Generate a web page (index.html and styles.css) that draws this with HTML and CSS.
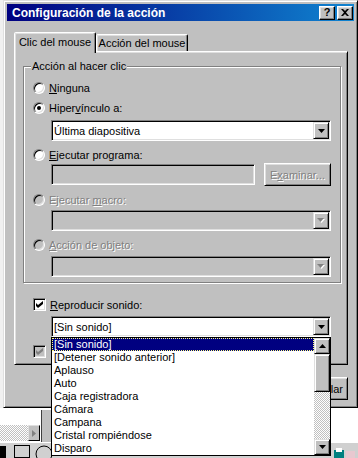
FILE: index.html
```html
<!DOCTYPE html>
<html lang="es">
<head>
<meta charset="utf-8">
<title>Configuración de la acción</title>
<link rel="stylesheet" href="styles.css">
</head>
<body>
<div class="app-bottom">
  <div class="vbar"></div>
  <div class="hscroll">
    <div class="hscroll-track"></div>
    <div class="hscroll-btn"><svg width="4" height="7" viewBox="0 0 4 7"><polygon points="0,0 4,3.5 0,7" fill="#808080"/></svg></div>
  </div>
  <div class="draw-toolbar">
    <svg class="draw-shapes" width="60" height="15" viewBox="0 0 60 15"><rect x="0" y="3" width="6" height="12" fill="#000"/><rect x="14.5" y="2.5" width="15" height="12" fill="none" stroke="#000"/><ellipse cx="44" cy="11" rx="8" ry="8" fill="none" stroke="#000"/></svg>
    <svg class="draw-color" width="22" height="11" viewBox="0 0 22 11"><rect x="0" y="3" width="10" height="8" fill="#008080"/><rect x="2" y="1" width="6" height="4" fill="#fff"/><rect x="12" y="4" width="9" height="7" fill="#e8c8d0"/></svg>
  </div>
</div>

<div class="dialog">
  <div class="titlebar">
    <span class="title">Configuración de la acción</span>
    <div class="caption-btns">
      <span class="cap-btn cap-help">?</span>
      <span class="cap-btn"><svg width="8" height="7" viewBox="0 0 8 7"><path d="M0 0h2l2 2 2-2h2L5 3.5 8 7H6L4 5 2 7H0l3-3.5z" fill="#000"/></svg></span>
    </div>
  </div>

  <div class="tabs">
    <div class="tab tab-active">Clic del mouse</div>
    <div class="tab tab-other">Acción del mouse</div>
  </div>

  <div class="panel">
    <div class="group">
      <div class="group-label">Acción al hacer clic</div>

      <div class="opt opt-first"><span class="radio"></span><span><u>N</u>inguna</span></div>
      <div class="opt opt-next"><span class="radio radio-on"></span><span>Hiper<u>v</u>ínculo a:</span></div>
      <div class="combo combo-a"><span class="combo-text">Última diapositiva</span><span class="combo-btn"><svg width="7" height="4" viewBox="0 0 7 4"><polygon points="0,0 7,0 3.5,4" fill="#000"/></svg></span></div>

      <div class="opt opt-next"><span class="radio"></span><span><u>E</u>jecutar programa:</span></div>
      <div class="field-row">
        <span class="textfield"></span>
        <span class="button disabled-text">E<u>x</u>aminar...</span>
      </div>

      <div class="opt opt-macro disabled-text"><span class="radio radio-off"></span><span>Ejecutar <u>m</u>acro:</span></div>
      <div class="combo combo-off combo-macro"><span class="combo-text"></span><span class="combo-btn"><svg width="8" height="5" viewBox="0 0 8 5"><polygon points="1,1 8,1 4.5,5" fill="#fff"/><polygon points="0,0 7,0 3.5,4" fill="#808080"/></svg></span></div>

      <div class="opt opt-next disabled-text"><span class="radio radio-off"></span><span><u>A</u>cción de objeto:</span></div>
      <div class="combo combo-off combo-obj"><span class="combo-text"></span><span class="combo-btn"><svg width="8" height="5" viewBox="0 0 8 5"><polygon points="1,1 8,1 4.5,5" fill="#fff"/><polygon points="0,0 7,0 3.5,4" fill="#808080"/></svg></span></div>
    </div>

    <div class="chk-row chk-sound"><span class="check"><svg width="7" height="7" viewBox="0 0 7 7"><path d="M0 2l2 2 5-4v3L2 7 0 5z" fill="#000"/></svg></span><span><u>R</u>eproducir sonido:</span></div>
    <div class="combo combo-sound"><span class="combo-text">[Sin sonido]</span><span class="combo-btn"><svg width="7" height="4" viewBox="0 0 7 4"><polygon points="0,0 7,0 3.5,4" fill="#000"/></svg></span></div>
    <div class="chk-row chk-highlight"><span class="check check-off"><svg width="7" height="7" viewBox="0 0 7 7"><path d="M0 2l2 2 5-4v3L2 7 0 5z" fill="#808080"/></svg></span></div>
  </div>

  <div class="buttons">
    <span class="button btn-main"></span>
    <span class="button btn-main btn-cancel">Cancelar</span>
  </div>
</div>

<div class="droplist">
  <div class="items">
    <div class="item item-sel">[Sin sonido]</div>
    <div class="item">[Detener sonido anterior]</div>
    <div class="item">Aplauso</div>
    <div class="item">Auto</div>
    <div class="item">Caja registradora</div>
    <div class="item">Cámara</div>
    <div class="item">Campana</div>
    <div class="item">Cristal rompiéndose</div>
    <div class="item">Disparo</div>
  </div>
  <div class="vscroll">
    <span class="sb-btn"><svg width="7" height="4" viewBox="0 0 7 4"><polygon points="0,4 7,4 3.5,0" fill="#000"/></svg></span>
    <span class="sb-thumb"></span>
    <span class="sb-track"></span>
    <span class="sb-btn"><svg width="7" height="4" viewBox="0 0 7 4"><polygon points="0,0 7,0 3.5,4" fill="#000"/></svg></span>
  </div>
</div>
</body>
</html>
```

FILE: styles.css
```css
* { box-sizing: border-box; }
html, body { margin: 0; padding: 0; }
body {
  width: 358px;
  height: 458px;
  overflow: hidden;
  position: relative;
  background: #f0f0f0;
  font-family: "Liberation Sans", Arial, sans-serif;
  font-size: 11px;
  color: #000;
}
u { text-decoration: underline; text-underline-offset: 1px; }

/* background application (behind the dialog) */
.app-bottom {
  position: absolute;
  left: 0;
  top: 408px;
  width: 358px;
  height: 50px;
  background: #fff;
}
.vbar {
  position: absolute;
  left: 41px;
  top: 2px;
  width: 10px;
  height: 32px;
  background: #c0c0c0;
  border-left: 1px solid #404040;
}
.hscroll {
  position: absolute;
  left: 0;
  top: 17px;
  width: 40px;
  height: 16px;
  display: flex;
}
.hscroll-track {
  flex: 1;
  background: repeating-conic-gradient(#fff 0 25%, #c0c0c0 0 50%) 0 0 / 2px 2px;
}
.hscroll-btn {
  width: 12px;
  background: #c0c0c0;
  border: 1px solid;
  border-color: #dfdfdf #000 #000 #dfdfdf;
  display: flex;
  align-items: center;
  justify-content: center;
}
.draw-toolbar {
  position: absolute;
  left: 0;
  top: 34px;
  width: 358px;
  height: 16px;
  background: #d0d0d0;
  border-top: 1px solid #fff;
  display: flex;
  align-items: flex-end;
  justify-content: space-between;
}
.draw-shapes, .draw-color { display: block; }
.draw-color { margin-right: 2px; }

/* dialog window */
.dialog {
  position: absolute;
  left: 3px;
  top: 0;
  width: 355px;
  height: 408px;
  background: #c0c0c0;
  border: 1px solid;
  border-color: #dfdfdf #000 #000 #dfdfdf;
  box-shadow: inset 1px 1px #fff, inset -1px -1px #808080;
  padding: 3px;
  display: flex;
  flex-direction: column;
}
.titlebar {
  height: 17px;
  flex: none;
  background: linear-gradient(90deg, #000080, #1084d0);
  display: flex;
  align-items: center;
  padding: 0 1px 0 5px;
  color: #fff;
  font-weight: bold;
  font-size: 12px;
}
.title { flex: 1; white-space: nowrap; }
.caption-btns { display: flex; gap: 2px; }
.cap-btn {
  width: 16px;
  height: 14px;
  background: #c0c0c0;
  border: 1px solid;
  border-color: #fff #000 #000 #fff;
  box-shadow: inset -1px -1px #808080, inset 1px 1px #dfdfdf;
  display: flex;
  align-items: center;
  justify-content: center;
  color: #000;
  font-size: 11px;
  line-height: 1;
}

/* tabs */
.tabs {
  display: flex;
  align-items: flex-start;
  height: 20px;
  flex: none;
  margin: 11px 0 0 7px;
  position: relative;
  z-index: 2;
}
.tab {
  background: #c0c0c0;
  border: 1px solid;
  border-bottom: 0;
  border-color: #fff #000 transparent #fff;
  border-radius: 2px 2px 0 0;
  box-shadow: inset -1px 0 #808080, inset 1px 1px #dfdfdf;
  display: flex;
  align-items: center;
  justify-content: center;
  white-space: nowrap;
}
.tab-active { width: 82px; height: 21px; padding-bottom: 2px; }
.tab-other { width: 92px; height: 17px; margin-top: 2px; }

/* panel */
.panel {
  flex: none;
  margin: -1px 6px 0 7px;
  height: 314px;
  border: 1px solid;
  border-color: #fff #000 #000 #fff;
  box-shadow: inset 1px 1px #dfdfdf, inset -1px -1px #808080;
}

.group {
  margin: 14px 6px 0 8px;
  border: 1px solid #808080;
  box-shadow: inset 1px 1px #fff, 1px 1px #fff;
  padding: 0 0 5px 0;
}
.group-label {
  width: max-content;
  margin: -7px 0 0 7px;
  padding: 0 1px;
  line-height: 13px;
  background: #c0c0c0;
}

.opt {
  display: flex;
  align-items: center;
  gap: 4px;
  height: 13px;
  margin-left: 9px;
  white-space: nowrap;
}
.opt-first { margin-top: 8px; }
.opt-next { margin-top: 7px; }
.opt-macro { margin-top: 7px; }

.radio {
  width: 12px;
  height: 12px;
  flex: none;
  border-radius: 50%;
  background: #fff;
  border: 1px solid;
  border-color: #808080 #fff #fff #808080;
  box-shadow: inset 1px 1px #000, inset -1px -1px #dfdfdf;
  display: flex;
  align-items: center;
  justify-content: center;
}
.radio-on::after {
  content: "";
  width: 4px;
  height: 4px;
  border-radius: 50%;
  background: #000;
}
.radio-off { background: #c0c0c0; }

.disabled-text { color: #808080; text-shadow: 1px 1px 0 #fff; }

.combo {
  width: 280px;
  height: 21px;
  margin-left: 27px;
  background: #fff;
  border: 1px solid;
  border-color: #808080 #fff #fff #808080;
  box-shadow: inset 1px 1px #000, inset -1px -1px #dfdfdf;
  padding: 1px 1px 1px 2px;
  display: flex;
  align-items: center;
}
.combo-text { flex: 1; white-space: nowrap; }
.combo-btn {
  width: 16px;
  height: 17px;
  flex: none;
  background: #c0c0c0;
  border: 1px solid;
  border-color: #dfdfdf #000 #000 #dfdfdf;
  box-shadow: inset 1px 1px #fff, inset -1px -1px #808080;
  display: flex;
  align-items: center;
  justify-content: center;
}
.combo-off { background: #c0c0c0; }
.combo-a { margin-top: 6px; }
.combo-macro { margin-top: 4px; }
.combo-obj { margin-top: 5px; }

.field-row {
  display: flex;
  align-items: center;
  gap: 9px;
  height: 23px;
  margin: 2px 0 0 27px;
}
.textfield {
  width: 204px;
  height: 21px;
  background: #c0c0c0;
  border: 1px solid;
  border-color: #808080 #fff #fff #808080;
  box-shadow: inset 1px 1px #000, inset -1px -1px #dfdfdf;
}
.button {
  height: 23px;
  background: #c0c0c0;
  border: 1px solid;
  border-color: #fff #000 #000 #fff;
  box-shadow: inset 1px 1px #dfdfdf, inset -1px -1px #808080;
  display: flex;
  align-items: center;
  justify-content: center;
  white-space: nowrap;
}
.field-row .button { width: 67px; }

.chk-row {
  display: flex;
  align-items: center;
  gap: 4px;
  height: 13px;
  margin-left: 18px;
  white-space: nowrap;
}
.chk-sound { margin-top: 15px; }
.chk-highlight { margin-top: 8px; }
.check {
  width: 13px;
  height: 13px;
  flex: none;
  background: #fff;
  border: 1px solid;
  border-color: #808080 #fff #fff #808080;
  box-shadow: inset 1px 1px #000, inset -1px -1px #dfdfdf;
  display: flex;
  align-items: center;
  justify-content: center;
}
.check-off { background: #c0c0c0; }
.combo-sound { margin: 5px 0 0 36px; }

.buttons {
  display: flex;
  justify-content: flex-end;
  gap: 3px;
  margin: 12px 6px 0 0;
}
.btn-main { width: 75px; }
.btn-cancel { justify-content: flex-end; padding-right: 4px; }

/* open drop-down list */
.droplist {
  position: absolute;
  left: 51px;
  top: 337px;
  width: 280px;
  height: 119px;
  background: #fff;
  border: 1px solid #000;
  display: flex;
  z-index: 5;
}
.items { flex: 1; min-width: 0; }
.item {
  height: 13px;
  line-height: 13px;
  padding-left: 2px;
  white-space: nowrap;
}
.item-sel {
  background: #000080;
  color: #fff;
  outline: 1px dotted #ffff80;
  outline-offset: -1px;
}
.vscroll {
  width: 16px;
  flex: none;
  display: flex;
  flex-direction: column;
}
.sb-btn, .sb-thumb {
  height: 16px;
  flex: none;
  background: #c0c0c0;
  border: 1px solid;
  border-color: #dfdfdf #000 #000 #dfdfdf;
  box-shadow: inset 1px 1px #fff, inset -1px -1px #808080;
  display: flex;
  align-items: center;
  justify-content: center;
}
.sb-thumb { height: 38px; }
.sb-track {
  flex: 1;
  background: repeating-conic-gradient(#fff 0 25%, #c0c0c0 0 50%) 0 0 / 2px 2px;
}
```
